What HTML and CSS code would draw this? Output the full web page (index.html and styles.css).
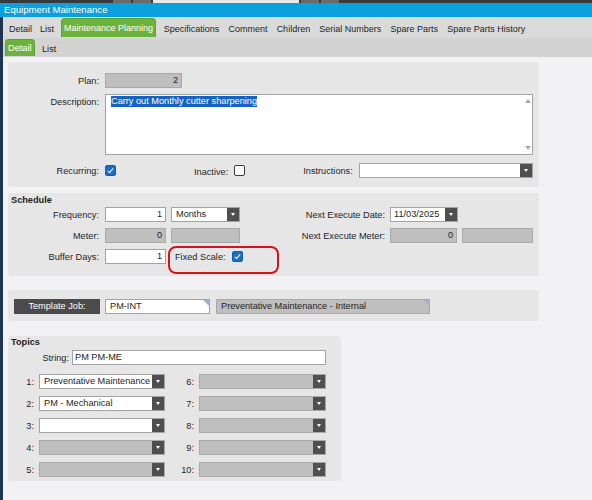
FILE: index.html
```html
<!DOCTYPE html>
<html lang="en">

<head>
    <meta charset="UTF-8">
    <title>Equipment Maintenance</title>
    <link rel="stylesheet" href="styles.css">
</head>

<body>
    <div class="topstrip">
        <span class="strip-gap"></span>
        <span class="strip-box"></span>
        <span class="strip-box"></span>
        <span class="strip-light"></span>
        <span class="strip-box"></span>
        <span class="strip-box"></span>
    </div>
    <div class="titlebar">Equipment Maintenance</div>

    <div class="window">
        <div class="tabs">
            <span class="tab">Detail</span>
            <span class="tab">List</span>
            <span class="tab active">Maintenance Planning</span>
            <span class="tab">Specifications</span>
            <span class="tab">Comment</span>
            <span class="tab">Children</span>
            <span class="tab">Serial Numbers</span>
            <span class="tab">Spare Parts</span>
            <span class="tab">Spare Parts History</span>
        </div>
        <div class="subtabs">
            <span class="subtab active">Detail</span>
            <span class="subtab">List</span>
        </div>

        <div class="content">
            <!-- plan details -->
            <div class="panel panel-main">
                <div class="row">
                    <span class="lbl">Plan:</span>
                    <span class="field grey num w-plan">2</span>
                </div>
                <div class="row row-desc">
                    <span class="lbl lbl-top">Description:</span>
                    <div class="textarea">
                        <span class="selected">Carry out Monthly cutter sharpening</span>
                        <span class="scroll-up"></span>
                        <span class="scroll-down"></span>
                    </div>
                </div>
                <div class="row row-flags">
                    <span class="lbl">Recurring:</span>
                    <span class="check on"></span>
                    <span class="inline-lbl inactive-lbl">Inactive:</span>
                    <span class="check"></span>
                    <span class="inline-lbl instr-lbl">Instructions:</span>
                    <span class="field select w-instr"><span class="drop"></span></span>
                </div>
            </div>

            <!-- schedule -->
            <div class="panel panel-schedule">
                <div class="panel-title">Schedule</div>
                <div class="row">
                    <span class="lbl">Frequency:</span>
                    <span class="field num w-small">1</span>
                    <span class="field select w-unit">Months<span class="drop"></span></span>
                    <span class="lbl-r">Next Execute Date:</span>
                    <span class="field select w-date">11/03/2025<span class="drop"></span></span>
                </div>
                <div class="row">
                    <span class="lbl">Meter:</span>
                    <span class="field grey num w-small">0</span>
                    <span class="field grey w-unit"></span>
                    <span class="lbl-r">Next Execute Meter:</span>
                    <span class="field grey num w-meter">0</span>
                    <span class="field grey w-meter-unit"></span>
                </div>
                <div class="row">
                    <span class="lbl">Buffer Days:</span>
                    <span class="field num w-small">1</span>
                    <span class="fixed-scale">
                        Fixed Scale:
                        <span class="check on"></span>
                        <span class="highlight"></span>
                    </span>
                </div>
            </div>

            <!-- template -->
            <div class="panel panel-template">
                <span class="template-btn">Template Job:</span>
                <span class="field w-job lookup">PM-INT</span>
                <span class="field grey w-job-desc lookup">Preventative Maintenance - Internal</span>
            </div>

            <!-- topics -->
            <div class="panel panel-topics">
                <div class="panel-title">Topics</div>
                <div class="row">
                    <span class="lbl lbl-string">String:</span>
                    <span class="field w-string">PM PM-ME</span>
                </div>
                <div class="topic-grid">
                    <div class="row">
                        <span class="lbl-n">1:</span>
                        <span class="field select w-topic">Preventative Maintenance<span class="drop"></span></span>
                        <span class="lbl-n2">6:</span>
                        <span class="field grey select w-topic2"><span class="drop"></span></span>
                    </div>
                    <div class="row">
                        <span class="lbl-n">2:</span>
                        <span class="field select w-topic">PM - Mechanical<span class="drop"></span></span>
                        <span class="lbl-n2">7:</span>
                        <span class="field grey select w-topic2"><span class="drop"></span></span>
                    </div>
                    <div class="row">
                        <span class="lbl-n">3:</span>
                        <span class="field select w-topic"><span class="drop"></span></span>
                        <span class="lbl-n2">8:</span>
                        <span class="field grey select w-topic2"><span class="drop"></span></span>
                    </div>
                    <div class="row">
                        <span class="lbl-n">4:</span>
                        <span class="field grey select w-topic"><span class="drop"></span></span>
                        <span class="lbl-n2">9:</span>
                        <span class="field grey select w-topic2"><span class="drop"></span></span>
                    </div>
                    <div class="row">
                        <span class="lbl-n">5:</span>
                        <span class="field grey select w-topic"><span class="drop"></span></span>
                        <span class="lbl-n2">10:</span>
                        <span class="field grey select w-topic2"><span class="drop"></span></span>
                    </div>
                </div>
            </div>
        </div>
    </div>
</body>

</html>
```

FILE: styles.css
```css
body {
    margin: 0;
    font-family: "Liberation Sans", Arial, sans-serif;
    font-size: 9.2px;
    color: #1e1e1e;
    background-color: #f2f2f4;
    /* Page Gray */
}

/* strip of the host window above the title */
.topstrip {
    height: 3px;
    display: flex;
    background-color: #3a3a3a;
}

.strip-gap {
    width: 113px;
}

.strip-box {
    width: 18px;
    margin-right: 2px;
    background-color: #6a6a6a;
}

.strip-light {
    width: 146px;
    margin-right: 2px;
    background-color: #e8e8e8;
}

.titlebar {
    height: 14px;
    line-height: 14px;
    padding-left: 4px;
    font-size: 9.6px;
    color: #ffffff;
    background-color: #0ba1df;
    /* Blue */
}

.window {
    border-left: 3px solid #1d3552;
    /* Navy */
    min-height: 483px;
}

/* tab rows */
.tabs {
    height: 21px;
    display: flex;
    align-items: flex-end;
    padding-left: 2px;
    font-size: 9px;
    background-color: #dadada;
}

.tab {
    height: 18px;
    line-height: 21px;
    padding: 0 4px;
    margin-bottom: 1px;
    white-space: nowrap;
}

.tab.active ~ .tab {
    padding: 0 4.6px;
}

.tab.active {
    line-height: 18px;
    padding: 0 2px;
    margin: 0 3px 1px;
    color: #ffffff;
    background-color: #6cb33e;
    border: 1px solid #5ea331;
    border-bottom: none;
    border-radius: 4px 4px 0 0;
}

.subtabs {
    height: 19px;
    display: flex;
    align-items: flex-end;
    padding-left: 2px;
    background-color: #d3d3d3;
}

.subtab {
    height: 17px;
    line-height: 20px;
    padding: 0 4px;
    margin-bottom: 1px;
}

.subtab.active {
    width: 30px;
    line-height: 16px;
    box-sizing: border-box;
    padding: 0 2px;
    margin-right: 3px;
    color: #ffffff;
    background-color: #6cb33e;
    border: 1px solid #5ea331;
    border-bottom: none;
    border-radius: 4px 4px 0 0;
}

/* panels */
.content {
    padding: 5px 5px 0;
}

.panel {
    width: 531px;
    box-sizing: border-box;
    background-color: #e6e6e6;
    border-radius: 3px;
}

.panel-main {
    height: 125px;
    padding-top: 11px;
}

.panel-schedule {
    height: 83px;
    margin-top: 6px;
    padding-top: 2px;
}

.panel-template {
    height: 31px;
    margin-top: 14px;
    padding: 9px 6px 0;
    display: flex;
    align-items: flex-start;
}

.panel-topics {
    width: 333px;
    height: 145px;
    margin-top: 15px;
    padding-top: 1px;
}

.panel-title {
    height: 10px;
    line-height: 10px;
    margin: 0 0 2px 3px;
    font-weight: bold;
}

.panel-topics .panel-title {
    margin-bottom: 3px;
}

.row {
    display: flex;
    align-items: center;
    height: 15px;
    margin-bottom: 6px;
}

.row-desc {
    height: 61px;
    align-items: flex-start;
}

.row-flags {
    margin-top: 8px;
}

.lbl {
    width: 97px;
    box-sizing: border-box;
    padding-right: 6px;
    text-align: right;
    white-space: nowrap;
}

.lbl-top {
    padding-top: 3px;
}

.lbl-r {
    width: 150px;
    box-sizing: border-box;
    padding-right: 5px;
    text-align: right;
    white-space: nowrap;
}

.inline-lbl {
    white-space: nowrap;
    margin-right: 6px;
}

.inactive-lbl {
    margin-left: 78px;
    padding-top: 3px;
}

.instr-lbl {
    margin-left: 58px;
}

/* fields */
.field {
    position: relative;
    height: 15px;
    line-height: 13px;
    box-sizing: border-box;
    padding: 0 4px;
    background-color: #ffffff;
    border: 1px solid #a3a3a3;
    white-space: nowrap;
    overflow: hidden;
}

.field.grey {
    background-color: #bfbfbf;
    /* Disabled Gray */
    border-color: #a9a9a9;
}

.field.num {
    text-align: right;
    padding-right: 3px;
}

.field.select {
    padding-right: 14px;
}

.drop {
    position: absolute;
    top: -1px;
    right: -1px;
    width: 13px;
    height: 15px;
    background-color: #4f4f4f;
    /* Dark Gray */
}

.drop::after {
    content: "";
    position: absolute;
    left: 4px;
    top: 6px;
    border-left: 2.5px solid transparent;
    border-right: 2.5px solid transparent;
    border-top: 3px solid #ffffff;
}

.lookup::after {
    content: "";
    position: absolute;
    top: 0;
    right: 0;
    border-top: 6px solid #9fb3cf;
    border-left: 6px solid transparent;
}

.w-plan {
    width: 77px;
}

.w-small {
    width: 61px;
}

.w-unit {
    width: 69px;
    margin-left: 5px;
}

.w-date {
    width: 68px;
    padding-left: 3px;
}

.w-meter {
    width: 67px;
}

.w-meter-unit {
    width: 71px;
    margin-left: 5px;
}

.w-instr {
    width: 174px;
}

.w-job {
    width: 105px;
    margin-left: 5px;
}

.w-job-desc {
    width: 214px;
    margin-left: 6px;
}

.w-string {
    width: 254px;
    padding-left: 2px;
}

.w-topic {
    width: 126px;
}

.w-topic2 {
    width: 127px;
}

/* description box */
.textarea {
    position: relative;
    width: 428px;
    height: 61px;
    box-sizing: border-box;
    padding: 1px 5px;
    background-color: #ffffff;
    border: 1px solid #a3a3a3;
}

.selected {
    color: #ffffff;
    background-color: #1463c4;
    /* Selection Blue */
    line-height: 11px;
    display: inline-block;
}

.scroll-up,
.scroll-down {
    position: absolute;
    right: 1px;
    border-left: 3px solid transparent;
    border-right: 3px solid transparent;
}

.scroll-up {
    top: 4px;
    border-bottom: 4px solid #a8a8a8;
}

.scroll-down {
    bottom: 4px;
    border-top: 4px solid #a8a8a8;
}

/* checkboxes */
.check {
    width: 11px;
    height: 11px;
    box-sizing: border-box;
    background-color: #ffffff;
    border: 1px solid #3c3c3c;
    border-radius: 2px;
    position: relative;
}

.check.on {
    background-color: #1a6cc4;
    border-color: #1a5aa8;
}

.check.on::after {
    content: "";
    position: absolute;
    left: 3px;
    top: 1px;
    width: 2px;
    height: 5px;
    border-right: 1.5px solid #ffffff;
    border-bottom: 1.5px solid #ffffff;
    transform: rotate(40deg);
}

.fixed-scale {
    position: relative;
    display: flex;
    align-items: center;
    gap: 6px;
    margin-left: 5px;
    padding-left: 4px;
    white-space: nowrap;
}

/* red ring drawn over the screenshot */
.highlight {
    position: absolute;
    left: -3px;
    top: -5px;
    width: 107px;
    height: 24px;
    border: 2.5px solid #d3141c;
    border-radius: 8px;
}

.template-btn {
    width: 86px;
    height: 15px;
    line-height: 15px;
    text-align: center;
    color: #ffffff;
    background-color: #4b4b4b;
}

/* topics grid */
.lbl-string {
    width: 64px;
    padding-right: 3px;
}

.topic-grid {
    margin-top: 9px;
}

.topic-grid .row {
    margin-bottom: 7px;
}

.lbl-n {
    width: 31px;
    box-sizing: border-box;
    padding-right: 5px;
    text-align: right;
}

.lbl-n2 {
    width: 34px;
    box-sizing: border-box;
    padding-right: 5px;
    text-align: right;
}
```
